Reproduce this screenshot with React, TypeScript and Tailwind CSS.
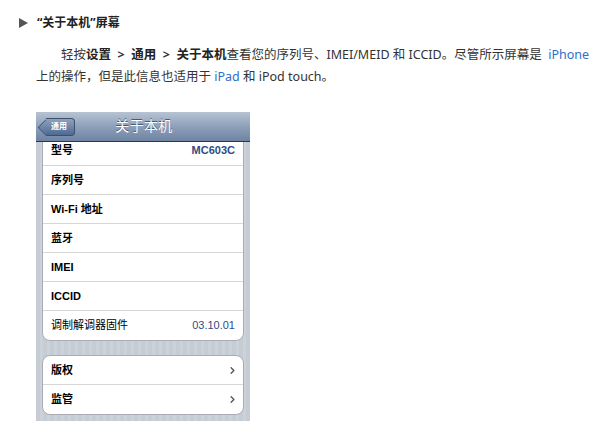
import { ChevronRight } from 'lucide-react';

const rows = [
  { label: '序列号', value: '' },
  { label: 'Wi-Fi 地址', value: '' },
  { label: '蓝牙', value: '' },
  { label: 'IMEI', value: '' },
  { label: 'ICCID', value: '' },
  { label: '调制解调器固件', value: '03.10.01', light: true },
];

export default function App() {
  const font = { fontFamily: '"Noto Sans", "Noto Sans CJK SC", sans-serif' };

  return (
    <div className="w-[600px] h-[446px] bg-white text-[#333] overflow-hidden" style={font}>
      <div className="flex items-center pt-[13px] pl-[19px] h-[33px]">
        <span className="w-0 h-0 border-y-[5px] border-y-transparent border-l-[9px] border-l-[#555]" />
        <span className="ml-[9px] text-[12px] font-bold text-[#222]">“关于本机”屏幕</span>
      </div>

      <div className="mt-[11px] pl-[36px] text-[12.5px] leading-[22px] text-[#333] whitespace-nowrap">
        <div className="pl-[25px]">
          轻按<b className="text-[#222]">设置</b>&nbsp; <b>&gt;</b>&nbsp; <b className="text-[#222]">通用</b>&nbsp; <b>&gt;</b>&nbsp;{' '}
          <b className="text-[#222]">关于本机</b>查看您的序列号、IMEI/MEID 和 ICCID。尽管所示屏幕是&nbsp;{' '}
          <span className="text-[#2f6fc7]">iPhone</span>
        </div>
        <div>
          上的操作，但是此信息也适用于 <span className="text-[#2f6fc7]">iPad</span> 和 iPod touch。
        </div>
      </div>

      <div className="ml-[36px] mt-[24px] w-[214px] h-[309px] flex flex-col overflow-hidden" style={{ fontFamily: '"Liberation Sans", "Noto Sans CJK SC", sans-serif' }}>
        <div className="h-[30px] shrink-0 relative flex items-center justify-center bg-gradient-to-b from-[#b7c3d3] via-[#8ea0b9] to-[#6e84a3] border-b border-[#2d3642]">
          <div className="absolute left-[4px] top-[6px] h-[18px] flex items-center">
            <div className="w-[13px] h-[13px] -mr-[7px] rotate-45 rounded-[2px] bg-gradient-to-br from-[#8fa2bd] to-[#4d6a92] border-l border-b border-[#3c4f6b]" />
            <div className="h-[18px] pl-[5px] pr-[7px] flex items-center rounded-r-[4px] bg-gradient-to-b from-[#8fa2bd] to-[#4d6a92] border-y border-r border-[#3c4f6b] text-white text-[8px] font-bold relative">
              通用
            </div>
          </div>
          <span className="text-white text-[14px] ml-[2px] tracking-wide [text-shadow:0_-1px_0_#4a5a70]">关于本机</span>
        </div>

        <div className="flex-1 px-[6px] bg-[repeating-linear-gradient(90deg,#c5ccd4_0px,#c5ccd4_4px,#cbd2da_4px,#cbd2da_7px)]">
          <div className="-mt-[7px] bg-white rounded-[8px] border border-[#a9adb3] overflow-hidden">
            <div className="h-[30px] flex items-center justify-between px-[8px] border-b border-[#d7d7d7]">
              <span className="text-[11px] font-bold text-black">型号</span>
              <span className="text-[11px] font-bold text-[#2e4d85]">MC603C</span>
            </div>
            {rows.map((row, i) => (
              <div
                key={row.label}
                className={`h-[29px] flex items-center justify-between px-[8px] ${i < rows.length - 1 ? 'border-b border-[#d7d7d7]' : ''}`}
              >
                <span className={`text-[11px] ${row.light ? 'font-normal' : 'font-bold'} text-black`}>{row.label}</span>
                <span className="text-[11px] text-[#2e4d85]">{row.value}</span>
              </div>
            ))}
          </div>

          <div className="mt-[14px] bg-white rounded-[8px] border border-[#a9adb3] overflow-hidden">
            {['版权', '监管'].map((label, i) => (
              <div
                key={label}
                className={`h-[29px] flex items-center justify-between pl-[8px] pr-[5px] ${i === 0 ? 'border-b border-[#d7d7d7]' : ''}`}
              >
                <span className="text-[11px] font-bold text-black">{label}</span>
                <ChevronRight className="w-[11px] h-[11px] text-[#555]" strokeWidth={3} />
              </div>
            ))}
          </div>
        </div>
      </div>
    </div>
  );
}
